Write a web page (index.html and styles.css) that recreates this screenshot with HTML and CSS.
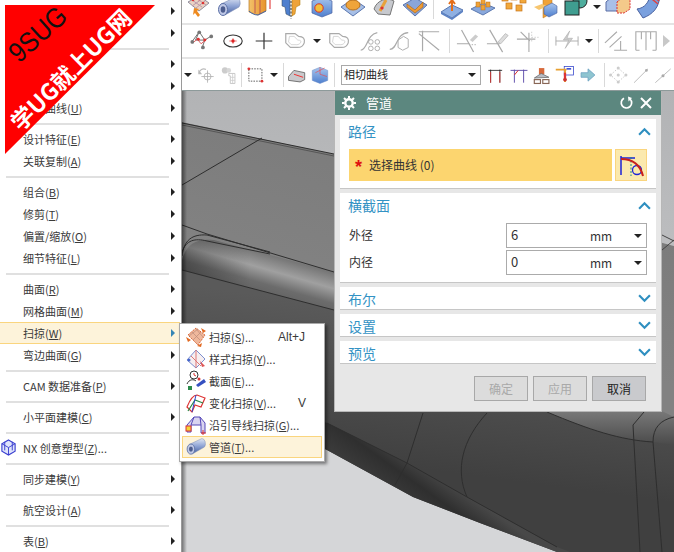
FILE: index.html
```html
<!DOCTYPE html>
<html lang="zh-CN">
<head>
<meta charset="utf-8">
<title>管道</title>
<link rel="stylesheet" href="styles.css">
</head>
<body>
<svg class="defs" aria-hidden="true">
  <defs>
    <linearGradient id="tube" x1="0" y1="0" x2="0" y2="1"><stop offset="0" stop-color="#dfe6f4"/><stop offset=".5" stop-color="#8ea3d4"/><stop offset="1" stop-color="#46609f"/></linearGradient>
    <linearGradient id="orange" x1="0" y1="0" x2="1" y2="0"><stop offset="0" stop-color="#f3c26a"/><stop offset="1" stop-color="#e8932c"/></linearGradient>
    <linearGradient id="blue" x1="0" y1="0" x2="0" y2="1"><stop offset="0" stop-color="#a9c6ee"/><stop offset="1" stop-color="#4e7fce"/></linearGradient>
    <symbol id="i-mesh" viewBox="0 0 26 26"><path d="M3 8 14 2l10 7-10 8z" fill="#e9d2c4" stroke="#8f8f9f"/><path d="M7 6l10 7M11 4l10 7M7 12l10-7M11 14l9-7" stroke="#b9a" fill="none"/><circle cx="8" cy="6" r="1.3" fill="#d33"/><circle cx="14" cy="5" r="1.3" fill="#d33"/><circle cx="18" cy="9" r="1.3" fill="#d33"/><path d="m9 14 5 1-2 2 3 4-2 2-3-4-2 2z" fill="#ee8a1f"/></symbol>
    <symbol id="i-tube" viewBox="0 0 26 26"><path d="M5 10 20 3a4.5 6 0 0 1 3 10L9 21z" fill="url(#tube)" stroke="#7d8db5" stroke-width=".6"/><ellipse cx="7" cy="15.500" rx="4.500" ry="6" fill="#bfc8e6" stroke="#5a6fa5"/><ellipse cx="7" cy="15.500" rx="2.300" ry="3.200" fill="#4d5d8e"/></symbol>
    <symbol id="i-ext" viewBox="0 0 26 26"><path d="M2 2h17v15l-8 4-9-3z" fill="url(#orange)" stroke="#b87a25" stroke-width=".7"/><path d="M8 4v15M13 3v17" stroke="#a35" stroke-width=".7" fill="none"/><path d="M2 17c3 3 6 4 9 4l8-4" stroke="#46a" fill="none"/><path d="M23 3v12M21 6l2-3 2 3" stroke="#d22" fill="none"/></symbol>
    <symbol id="i-split" viewBox="0 0 26 26"><path d="M4 1h8v21l-4-2-1-7-3-1z" fill="#4e7fce" stroke="#345"  stroke-width=".5"/><path d="M14 1h8v10l-4 2-1 7-3 2z" fill="#eea33a" stroke="#a70" stroke-width=".5"/><path d="M13 0v25" stroke="#333" stroke-dasharray="2 1.500"/></symbol>
    <symbol id="i-cube" viewBox="0 0 26 26"><path d="M3 7 14 3l9 4v12l-10 4-10-4z" fill="url(#blue)" stroke="#4a62a0" stroke-width=".7"/><circle cx="10" cy="14" r="4.200" fill="#f1bf3c" stroke="#d8352a"/></symbol>
    <symbol id="i-pad" viewBox="0 0 26 26"><path d="M1 13 13 5l12 8-12 9z" fill="#a7bfe6" stroke="#5a77b0"/><ellipse cx="13" cy="11" rx="7" ry="5" fill="#efa43a" stroke="#b9701a"/></symbol>
    <symbol id="i-fan" viewBox="0 0 26 26"><path d="M3 15C6 6 16 3 23 7l-4 14L7 20z" fill="#c7c9ce" stroke="#777"/><path d="M9 17 15 6" stroke="#e8a23a" stroke-width="3"/><circle cx="11" cy="14" r="1.600" fill="#d33"/></symbol>
    <symbol id="i-v" viewBox="0 0 26 26"><path d="M1 11 13 4l12 7-12 11z" fill="#8aa5d8" stroke="#5c76ad"/><path d="M5 10l8 6 8-8v5l-8 6-8-6z" fill="#ef9a32" stroke="#a8651a" stroke-width=".6"/></symbol>
    <symbol id="i-lift" viewBox="0 0 26 26"><path d="M2 18 13 11l11 5-11 8z" fill="#8fb0e2" stroke="#5a78b0"/><path d="M2 18v2l11 6 11-8v-2l-11 8z" fill="#5c82c4"/><path d="M13 17V7M10 10l3-4 3 4" stroke="#e46f1c" stroke-width="2" fill="none"/><path d="M7 4h12" stroke="#eeb348" stroke-width="3"/></symbol>
    <symbol id="i-blocks" viewBox="0 0 26 26"><path d="M1 15 13 9l12 5-12 7z" fill="#89a8dc" stroke="#5a78b0"/><g fill="#f0a236" stroke="#b9701a" stroke-width=".5"><rect x="6" y="8" width="4" height="5"/><rect x="11" y="5" width="4" height="5"/><rect x="16" y="8" width="4" height="5"/><rect x="11" y="11" width="4" height="5"/></g></symbol>
    <symbol id="i-dots" viewBox="0 0 26 26"><g fill="#f1a83c" stroke="#c8751c" stroke-width=".7"><rect x="1" y="1" width="6" height="6"/><rect x="10" y="0" width="6" height="6"/><rect x="19" y="3" width="6" height="6"/><rect x="5" y="9" width="6" height="6"/><rect x="15" y="11" width="6" height="6"/></g></symbol>
    <symbol id="i-mirror" viewBox="0 0 26 26"><path d="M11 1 20 5v14l-9 5z" fill="#f0a236" stroke="#b9701a" stroke-width=".5"/><path d="M2 13l8-3 5 2-8 4z" fill="#f7c66f"/><path d="M12 13l8-4 5 3v7l-8 4-5-3z" fill="url(#blue)" stroke="#4a62a0" stroke-width=".6"/></symbol>
    <symbol id="i-bool" viewBox="0 0 26 26"><circle cx="17" cy="7" r="7" fill="#4fae9e" stroke="#222"/><rect x="2" y="7" width="14" height="14" fill="#3f9d90" stroke="#222"/><rect x="3" y="0" width="4" height="4" fill="#e8e8e8" stroke="#c33"/></symbol>
    <symbol id="i-boxes" viewBox="0 0 26 26"><path d="M1 8 7 3h9v14H1z" fill="#a8bfe8" stroke="#5a6fa5"/><path d="M12 8l6-5h7v12l-6 4h-7z" fill="#f4c98a" stroke="#d33" stroke-dasharray="2 1"/></symbol>
    <symbol id="i-bend" viewBox="0 0 26 26"><path d="M2 15C10 14 14 8 15 1h10C24 14 18 20 8 24z" fill="#7aa0de" stroke="#4a62a0"/><path d="M12 1l11 9M15 0l9 7" stroke="#d44" stroke-width="1.500"/></symbol>

    <symbol id="i-spline" viewBox="0 0 26 26"><path d="M2 14 10 3l6 9 8-5M10 3l-4 9 10 0-3 9" stroke="#666" stroke-width="1" fill="none"/><path d="M3 15 8 11l4 5 6-5" stroke="#d55" fill="none"/><circle cx="2.500" cy="14" r="2" fill="#777"/><circle cx="10" cy="3.500" r="2" fill="#777"/><circle cx="23" cy="8" r="2" fill="#777"/><circle cx="14" cy="20" r="2" fill="#777"/><circle cx="9" cy="11" r="1.600" fill="#d33"/><circle cx="16" cy="12" r="1.600" fill="#d33"/></symbol>
    <symbol id="i-circle" viewBox="0 0 26 26"><ellipse cx="13" cy="13" rx="10" ry="6.500" fill="#fff" stroke="#333" stroke-width="1.200"/><circle cx="13" cy="13" r="1.800" fill="#d22"/><path d="M9 13h8M13 10v6" stroke="#d22" stroke-width=".7"/></symbol>
    <symbol id="i-plus" viewBox="0 0 26 26"><path d="M4 13h18M13 4v18" stroke="#333" stroke-width="1.300"/></symbol>
    <symbol id="i-outline" viewBox="0 0 26 26"><path d="M3 5h10l4 3c5 0 7 3 6 7-1 3-3 5-7 5H8l-5-5z" fill="none" stroke="#aaa" stroke-width="1.300"/><path d="M7 8h5l4 4c3 0 4 1 3 3-1 1-2 2-4 2H9l-3-3z" fill="none" stroke="#c8c8c8" stroke-width=".8"/></symbol>
    <symbol id="i-trim" viewBox="0 0 26 26"><path d="M4 23C12 22 10 6 22 4" fill="none" stroke="#aaa" stroke-width="1.300"/><g fill="none" stroke="#aaa"><circle cx="15" cy="14" r="2.500"/><circle cx="22" cy="14" r="2.500"/><circle cx="15" cy="21" r="2.500"/><circle cx="22" cy="21" r="2.500"/></g></symbol>
    <symbol id="i-offset" viewBox="0 0 26 26"><path d="M3 22C12 22 9 5 23 4" fill="none" stroke="#aaa" stroke-width="1.300"/><path d="M12 12l6-4 5 3v9l-6 3-5-3z" fill="none" stroke="#aaa"/></symbol>
    <symbol id="i-corner" viewBox="0 0 26 26"><path d="M2 3h22M6 2v22M2 5l22 18" fill="none" stroke="#aaa" stroke-width="1.300"/></symbol>
    <symbol id="i-cut" viewBox="0 0 26 26"><path d="M6 1l13 24M1 16h14" stroke="#aaa" stroke-width="1.300" fill="none"/><path d="M15 12l6-6 3 2-6 6z" fill="#ccc"/><path d="M14 17h8" stroke="#aaa" stroke-dasharray="1.500"/></symbol>
    <symbol id="i-pen" viewBox="0 0 26 26"><path d="M4 1l14 24M1 16h14" stroke="#aaa" stroke-width="1.300" fill="none"/><path d="M13 14l8-9 3 2-8 9z" fill="#ddd" stroke="#aaa" stroke-width=".7"/></symbol>
    <symbol id="i-cross" viewBox="0 0 26 26"><path d="M1 11h20M14 4v21M5 3l10 10" stroke="#aaa" stroke-width="1.200" fill="none"/><path d="M17 3v12M17 9h8" stroke="#ccc" stroke-dasharray="1.500"/></symbol>
    <symbol id="i-dim" viewBox="0 0 26 26"><path d="M1 8v10M25 8v10M1 13h24" stroke="#aaa" fill="none"/><path d="M16 2 9 12h6l-4 9 8-11h-6z" fill="#ccc" stroke="#aaa" stroke-width=".6"/></symbol>
    <symbol id="i-para" viewBox="0 0 26 26"><path d="M1 15 14 3M6 20 19 8M11 23h14M18 13v10" stroke="#aaa" stroke-width="1.200" fill="none"/></symbol>
    <symbol id="i-frame" viewBox="0 0 26 26"><path d="M2 23V3h22v20M2 23h4M24 23h-4M8 3v8M18 3v8M13 3v20" stroke="#aaa" stroke-width="1.200" fill="none"/></symbol>

    <symbol id="i-rotate" viewBox="0 0 26 26"><path d="M4 11a6 6 0 0 1 9-5" fill="none" stroke="#bbb" stroke-width="1.500"/><path d="M3 6v6h5z" fill="#bbb"/><circle cx="15" cy="15" r="4.500" fill="none" stroke="#aaa"/><path d="M15 7v16M7 15h16" stroke="#aaa"/></symbol>
    <symbol id="i-gears" viewBox="0 0 26 26"><circle cx="9" cy="7" r="4" fill="#ccc"/><circle cx="14" cy="7" r="3" fill="#d8d8d8"/><path d="M14 11h8v13h-6V14h-2z" fill="none" stroke="#bbb"/><path d="M16 16h6M16 20h6M19 11v13" stroke="#ccc"/></symbol>
    <symbol id="i-rect" viewBox="0 0 26 26"><path d="M5 5h17v16H5z" fill="none" stroke="#333" stroke-dasharray="2 1.500"/><circle cx="5" cy="5" r="1.800" fill="#d33"/><circle cx="22" cy="21" r="1.800" fill="#d33"/></symbol>
    <symbol id="i-solid" viewBox="0 0 26 26"><path d="M2 15 9 7l14 3v9l-6 3-15-2z" fill="#c9c9cc" stroke="#555"/><path d="M9 12l12 4" stroke="#e33" stroke-width="1.300"/></symbol>
    <symbol id="i-sect" viewBox="0 0 26 26"><path d="M3 7 13 3l10 4v13l-10 4-10-4z" fill="url(#blue)" stroke="#6d8ec8" stroke-width=".7"/><path d="M7 10l12-6M13 3v9l9 3" stroke="#e44" fill="none" stroke-width=".8"/></symbol>
    <symbol id="i-sn1" viewBox="0 0 26 26"><path d="M3 7h18M6 6v17M18 6v17" stroke="#222" stroke-width="1.100" fill="none"/><path d="M6 9v14M18 9v14" stroke="#d33" stroke-width="1.100"/></symbol>
    <symbol id="i-sn2" viewBox="0 0 26 26"><path d="M2 7h22M7 6v17M19 6v17" stroke="#5a48a8" stroke-width="1.200" fill="none"/><path d="M7 13 12 7" stroke="#d33" stroke-width="1.300"/></symbol>
    <symbol id="i-sn3" viewBox="0 0 26 26"><rect x="9" y="4" width="7" height="8" fill="#d86a3c"/><path d="M3 17 12 11l10 5z" fill="#b8bcc4" stroke="#666"/><rect x="3" y="19" width="8" height="5" fill="none" stroke="#865" stroke-width="1.500"/><rect x="14" y="19" width="8" height="5" fill="none" stroke="#865" stroke-width="1.500"/></symbol>
    <symbol id="i-sn4" viewBox="0 0 26 26"><rect x="12" y="2" width="12" height="11" fill="#fff" stroke="#34c"/><path d="M1 6h14M13 6v8M13 14v8" stroke="#e8a030" stroke-width="2.500"/><path d="M13 10v7" stroke="#d33" stroke-width="3"/><circle cx="13" cy="19" r="2.500" fill="#c33"/><path d="M15 5h6" stroke="#34c" stroke-width="2"/></symbol>
    <symbol id="i-go" viewBox="0 0 26 26"><path d="M4 10h9V5l9 8-9 8v-5H4z" fill="#8fc5d0" stroke="#6a9fc0"/></symbol>
    <symbol id="i-snapg" viewBox="0 0 26 26"><path d="M12 4 22 13 12 22 2 13z" fill="none" stroke="#bbb" stroke-dasharray="2 2"/><g fill="#ccc"><circle cx="12" cy="4" r="2"/><circle cx="22" cy="13" r="2"/><circle cx="12" cy="22" r="2"/><circle cx="2" cy="13" r="2"/><circle cx="12" cy="13" r="2"/></g></symbol>
    <symbol id="i-lineg" viewBox="0 0 26 26"><path d="M4 23 22 5" stroke="#aaa"/><circle cx="20" cy="7" r="1.800" fill="#aaa"/></symbol>
    <symbol id="i-lineh" viewBox="0 0 26 26"><path d="M3 23 23 5" stroke="#aaa"/><circle cx="13" cy="14" r="2" fill="#aaa"/></symbol>

    <symbol id="m-sweep" viewBox="0 0 22 22"><path d="M3 9 11 2l9 7-7 10z" fill="#efb89c" stroke="#d8683a" stroke-dasharray="2 1"/><path d="M7 6l8 8M11 3l7 8M4 10l9-7M8 14l8-8" stroke="#bb8a78" stroke-width=".7" fill="none"/><path d="M1 11l2 5 3-2M16 2l5 3-3 2M12 20l4 1 1-4" fill="#e26a22"/></symbol>
    <symbol id="m-style" viewBox="0 0 22 22"><path d="M2 12 11 2l9 9-9 9z" fill="#f6eef0" stroke="#7c8fd0"/><path d="M6 8l10 10M11 2v18" stroke="#d77" fill="none"/><circle cx="4" cy="12" r="1.500" fill="#46c"/><path d="M15 13l5 5-3 1z" fill="#d55"/></symbol>
    <symbol id="m-sect" viewBox="0 0 22 22"><circle cx="9" cy="5" r="4" fill="#fff" stroke="#333"/><path d="M9 3v2l2 1" stroke="#d33" fill="none"/><path d="M2 14c2-5 7-5 9-3" stroke="#333" fill="none"/><path d="M11 15l8-6 2 3-8 5z" fill="#3550c0"/><path d="M3 16h4v4H3z" fill="#2a8a4a"/><circle cx="14" cy="9" r="1.500" fill="#d33"/></symbol>
    <symbol id="m-vary" viewBox="0 0 22 22"><path d="M2 15C6 5 10 3 12 3l8 3-4 9-6-2-3 7z" fill="#fff" stroke="#d33" stroke-width="1.200"/><path d="M3 19 10 8l8 3" stroke="#2a8a4a" stroke-width="1.200" fill="none"/><path d="M11 3 7 20" stroke="#34c" fill="none"/></symbol>
    <symbol id="m-guide" viewBox="0 0 22 22"><path d="M2 11 9 3h6l5 6v10h-4V11H6v7H2z" fill="#d9d4f0" stroke="#5548b8"/><path d="M9 3 6 11M15 3l1 8" stroke="#5548b8" fill="none"/><rect x="1" y="12" width="5" height="5" fill="#f3d33a" stroke="#d33"/><path d="M18 16v5M16 19h5" stroke="#d33"/></symbol>
  </defs>
</svg>

<div class="app">
  <nav class="menu">
    <div class="item has-sub"></div>
    <div class="item has-sub"></div>
    <hr class="sep">
    <div class="item has-sub"></div>
    <div class="item has-sub"></div>
    <div class="item has-sub">派生曲线(<u>U</u>)</div>
    <hr class="sep">
    <div class="item has-sub">设计特征(<u>E</u>)</div>
    <div class="item has-sub">关联复制(<u>A</u>)</div>
    <hr class="sep">
    <div class="item has-sub">组合(<u>B</u>)</div>
    <div class="item has-sub">修剪(<u>T</u>)</div>
    <div class="item has-sub">偏置/缩放(<u>O</u>)</div>
    <div class="item has-sub">细节特征(<u>L</u>)</div>
    <hr class="sep">
    <div class="item has-sub">曲面(<u>R</u>)</div>
    <div class="item has-sub">网格曲面(<u>M</u>)</div>
    <div class="item has-sub active">扫掠(<u>W</u>)</div>
    <div class="item has-sub">弯边曲面(<u>G</u>)</div>
    <hr class="sep">
    <div class="item has-sub">CAM 数据准备(<u>P</u>)</div>
    <hr class="sep">
    <div class="item has-sub">小平面建模(<u>C</u>)</div>
    <hr class="sep">
    <div class="item"><svg class="nx-icon" viewBox="0 0 18 18"><path d="M9 1l7 4v8l-7 4-7-4V5z" fill="#dfe4fb" stroke="#3a3fd0" stroke-width="1.200"/><path d="M2 5l7 4 7-4M9 9v8M5 3v9M13 3v9" fill="none" stroke="#3a3fd0"/></svg><span>NX 创意塑型(<u>Z</u>)...</span></div>
    <hr class="sep">
    <div class="item has-sub">同步建模(<u>Y</u>)</div>
    <hr class="sep">
    <div class="item has-sub">航空设计(<u>A</u>)</div>
    <hr class="sep">
    <div class="item has-sub">表(<u>B</u>)</div>
  </nav>

  <main class="work">
    <div class="toolbars">
      <div class="bar bar-1">
        <span class="t w31"><svg class="ic"><use href="#i-mesh"/></svg></span>
        <span class="t w31"><svg class="ic"><use href="#i-tube"/></svg></span>
        <span class="t w31"><svg class="ic"><use href="#i-ext"/></svg></span>
        <span class="t w31"><svg class="ic"><use href="#i-split"/></svg></span>
        <span class="t w31"><svg class="ic"><use href="#i-cube"/></svg></span>
        <span class="t w31"><svg class="ic"><use href="#i-pad"/></svg></span>
        <span class="t w31"><svg class="ic"><use href="#i-fan"/></svg></span>
        <span class="t w31"><svg class="ic"><use href="#i-v"/></svg></span>
        <span class="vr w6"></span>
        <span class="t w31"><svg class="ic"><use href="#i-lift"/></svg></span>
        <span class="t w31"><svg class="ic"><use href="#i-blocks"/></svg></span>
        <span class="t w31"><svg class="ic"><use href="#i-dots"/></svg></span>
        <span class="t w31"><svg class="ic"><use href="#i-mirror"/></svg></span>
        <span class="t w31"><svg class="ic"><use href="#i-bool"/></svg></span>
        <span class="caret w12"></span>
        <span class="t w30"><svg class="ic"><use href="#i-boxes"/></svg></span>
        <span class="t w30"><svg class="ic"><use href="#i-bend"/></svg></span>
      </div>
      <div class="bar bar-2">
        <span class="t w31"><svg class="ic"><use href="#i-spline"/></svg></span>
        <span class="t w31"><svg class="ic"><use href="#i-circle"/></svg></span>
        <span class="t w31"><svg class="ic"><use href="#i-plus"/></svg></span>
        <span class="t w31"><svg class="ic"><use href="#i-outline"/></svg></span>
        <span class="caret w14"></span>
        <span class="t w30"><svg class="ic"><use href="#i-outline"/></svg></span>
        <span class="t w30"><svg class="ic"><use href="#i-trim"/></svg></span>
        <span class="t w30"><svg class="ic"><use href="#i-offset"/></svg></span>
        <span class="t w30"><svg class="ic"><use href="#i-corner"/></svg></span>
        <span class="vr w9"></span>
        <span class="t w30"><svg class="ic"><use href="#i-cut"/></svg></span>
        <span class="t w30"><svg class="ic"><use href="#i-pen"/></svg></span>
        <span class="t w30"><svg class="ic"><use href="#i-cross"/></svg></span>
        <span class="vr w9"></span>
        <span class="t w30"><svg class="ic"><use href="#i-dim"/></svg></span>
        <span class="caret w13"></span>
        <span class="vr w6"></span>
        <span class="t w30"><svg class="ic"><use href="#i-para"/></svg></span>
        <span class="t w30"><svg class="ic"><use href="#i-frame"/></svg></span>
        <span class="caret-right"></span>
      </div>
      <div class="bar bar-3">
        <span class="caret w12"></span>
        <span class="t w24"><svg class="ic"><use href="#i-rotate"/></svg></span>
        <span class="t w20"><svg class="ic"><use href="#i-gears"/></svg></span>
        <span class="vr w6"></span>
        <span class="t w22"><svg class="ic"><use href="#i-rect"/></svg></span>
        <span class="caret w16"></span>
        <span class="vr w2"></span>
        <span class="t w26"><svg class="ic"><use href="#i-solid"/></svg></span>
        <span class="t w20"><svg class="ic"><use href="#i-sect"/></svg></span>
        <span class="vr w8"></span>
        <div class="combo"><span>相切曲线</span><i class="dd"></i></div>
        <span class="t w23"><svg class="ic"><use href="#i-sn1"/></svg></span>
        <span class="t w23"><svg class="ic"><use href="#i-sn2"/></svg></span>
        <span class="t w23"><svg class="ic"><use href="#i-sn3"/></svg></span>
        <span class="t w23"><svg class="ic"><use href="#i-sn4"/></svg></span>
        <span class="t w23"><svg class="ic"><use href="#i-go"/></svg></span>
        <span class="vr w8"></span>
        <span class="t w22"><svg class="ic"><use href="#i-snapg"/></svg></span>
        <span class="t w22"><svg class="ic"><use href="#i-lineg"/></svg></span>
        <span class="t w22"><svg class="ic"><use href="#i-lineh"/></svg></span>
      </div>
    </div>

    <div class="viewport">
      <svg class="scene" viewBox="182 91 492 461" preserveAspectRatio="none" aria-hidden="true">
        <defs>
          <linearGradient id="sky" x1="0" y1="0" x2="0" y2="1"><stop offset="0" stop-color="#b2b3b5"/><stop offset="1" stop-color="#bcbdbf"/></linearGradient>
          <linearGradient id="roof" gradientUnits="userSpaceOnUse" x1="300" y1="130" x2="260" y2="270"><stop offset="0" stop-color="#7c7c7c"/><stop offset="1" stop-color="#828282"/></linearGradient>
          <linearGradient id="band" gradientUnits="userSpaceOnUse" x1="275" y1="240" x2="255" y2="310"><stop offset="0" stop-color="#646464"/><stop offset=".22" stop-color="#777"/><stop offset=".42" stop-color="#a0a0a0"/><stop offset=".62" stop-color="#6c6c6c"/><stop offset="1" stop-color="#525252"/></linearGradient>
          <linearGradient id="bandfade" gradientUnits="userSpaceOnUse" x1="182" y1="0" x2="250" y2="0"><stop offset="0" stop-color="#000" stop-opacity=".3"/><stop offset="1" stop-color="#000" stop-opacity="0"/></linearGradient>
          <linearGradient id="body" gradientUnits="userSpaceOnUse" x1="300" y1="300" x2="280" y2="450"><stop offset="0" stop-color="#5a5a5a"/><stop offset="1" stop-color="#404040"/></linearGradient>
          <linearGradient id="lip" gradientUnits="userSpaceOnUse" x1="420" y1="460" x2="395" y2="495"><stop offset="0" stop-color="#484848"/><stop offset=".5" stop-color="#2f2f2f"/><stop offset="1" stop-color="#3a3a3a"/></linearGradient>
          <linearGradient id="rightcap" gradientUnits="userSpaceOnUse" x1="660" y1="410" x2="660" y2="445"><stop offset="0" stop-color="#7a7a7a"/><stop offset="1" stop-color="#4a4a4a"/></linearGradient>
          <linearGradient id="shade" x1="0" y1="0" x2="1" y2="0"><stop offset="0" stop-color="#000" stop-opacity=".45"/><stop offset="1" stop-color="#000" stop-opacity="0"/></linearGradient>
        </defs>
        <rect x="182" y="91" width="492" height="461" fill="#d5d6d8"/>
        <path d="M182 91H674V246L334 154 182 122z" fill="url(#sky)"/>
        <path d="M182 122 334 154 674 246V440L182 280z" fill="url(#roof)"/>
        <path d="M182 260C186 244 196 238 214 240L334 272 674 420V470L182 300z" fill="url(#band)"/>
        <path d="M182 260C186 244 196 238 214 240L334 272 674 420V470L182 300z" fill="url(#bandfade)"/>
        <path d="M182 270 334 310 674 440V552H557L480 523 413 497 327 450 182 380z" fill="url(#body)"/>
        <path d="M182 360 327 423 407 463 467 497 557 547 570 552H557L480 523 413 497 327 450 182 380z" fill="url(#lip)"/>
        <path d="M547 412C590 430 620 440 653 442L674 445V417L660 410z" fill="url(#rightcap)"/>
        <g fill="none" stroke="#2e2e2e">
          <path d="M182 123 334 154"/>
          <path d="M182 125 334 156" stroke="#555"/>
          <path d="M182 185 262 138"/>
          <path d="M182 225 207 234 334 272"/>
          <path d="M182 256C184 240 192 234 207 235L270 252"/>
          <path d="M182 252C186 240 195 238 207 241L270 254"/>
          <path d="M182 270 334 310"/>
          <path d="M327 423 407 463 467 497 557 547"/>
          <path d="M423 413 407 463 395 485"/>
          <path d="M487 413C462 440 455 470 467 497"/>
          <path d="M547 412C590 430 620 440 653 442"/>
          <path d="M674 417C660 420 653 428 653 442L662 552"/>
          <path d="M644 412 633 425 640 552"/>
        </g>
        <rect x="182" y="91" width="5" height="461" fill="url(#shade)"/>
        <path d="M662 235 674 241M662 250 674 240" stroke="#444" fill="none"/>
      </svg>

      <section class="dialog">
        <header class="dlg-title">
          <svg class="gear" viewBox="0 0 14 14"><circle cx="7" cy="7" r="3.700" fill="none" stroke="#fff" stroke-width="2.400"/><path d="M7 0v2.500M7 11.500V14M0 7h2.500M11.500 7H14M2 2l1.800 1.800M10.200 10.200 12 12M2 12l1.800-1.800M10.200 3.800 12 2" stroke="#fff" stroke-width="2"/></svg>
          <span class="dlg-name">管道</span>
          <svg class="reset" viewBox="0 0 14 14"><path d="M5 2.200A5.200 5.200 0 1 0 11 3" fill="none" stroke="#fff" stroke-width="1.700"/><path d="M9 .5 9.500 5.500 13 2z" fill="#fff"/></svg>
          <svg class="close" viewBox="0 0 12 12"><path d="M1 1l10 10M11 1 1 11" stroke="#fff" stroke-width="2"/></svg>
        </header>
        <div class="dlg-body">
          <div class="panel">
            <div class="panel-head"><span>路径</span><svg class="chev" viewBox="0 0 12 8"><path d="M1 7l5-5 5 5" fill="none" stroke="#2f8fc0" stroke-width="2"/></svg></div>
            <div class="select-row">
              <div class="select-field"><span class="req">*</span>选择曲线 (0)</div>
              <div class="select-icon">
                <svg viewBox="0 0 26 26"><path d="M3 4v19M3 6h14" stroke="#1c22d8" stroke-width="1.500" fill="none"/><path d="M13 5v19" stroke="#178a88" stroke-dasharray="2 1.500"/><circle cx="19" cy="18" r="4.500" fill="none" stroke="#1c22d8" stroke-width="1.300"/><path d="M3 7C14 7 22 12 25 24" stroke="#c8201c" stroke-width="2" fill="none"/></svg>
              </div>
            </div>
          </div>
          <div class="panel">
            <div class="panel-head"><span>横截面</span><svg class="chev" viewBox="0 0 12 8"><path d="M1 7l5-5 5 5" fill="none" stroke="#2f8fc0" stroke-width="2"/></svg></div>
            <div class="fields">
              <label class="field"><span class="field-name">外径</span><span class="input"><span class="val">6</span><span class="unit">mm</span><i class="dd"></i></span></label>
              <label class="field"><span class="field-name">内径</span><span class="input"><span class="val">0</span><span class="unit">mm</span><i class="dd"></i></span></label>
            </div>
          </div>
          <div class="panel closed"><div class="panel-head"><span>布尔</span><svg class="chev" viewBox="0 0 12 8"><path d="M1 1l5 5 5-5" fill="none" stroke="#2f8fc0" stroke-width="2"/></svg></div></div>
          <div class="panel closed"><div class="panel-head"><span>设置</span><svg class="chev" viewBox="0 0 12 8"><path d="M1 1l5 5 5-5" fill="none" stroke="#2f8fc0" stroke-width="2"/></svg></div></div>
          <div class="panel closed"><div class="panel-head"><span>预览</span><svg class="chev" viewBox="0 0 12 8"><path d="M1 1l5 5 5-5" fill="none" stroke="#2f8fc0" stroke-width="2"/></svg></div></div>
        </div>
        <footer class="dlg-foot">
          <span class="btn off">确定</span>
          <span class="btn off">应用</span>
          <span class="btn">取消</span>
        </footer>
      </section>
    </div>
  </main>

  <div class="flyout">
    <div class="fly-item"><svg class="fly-ic"><use href="#m-sweep"/></svg><span class="fly-label">扫掠(<u>S</u>)...</span><span class="key key-alt">Alt+J</span></div>
    <div class="fly-item"><svg class="fly-ic"><use href="#m-style"/></svg><span class="fly-label">样式扫掠(<u>Y</u>)...</span></div>
    <div class="fly-item"><svg class="fly-ic"><use href="#m-sect"/></svg><span class="fly-label">截面(<u>E</u>)...</span></div>
    <div class="fly-item"><svg class="fly-ic"><use href="#m-vary"/></svg><span class="fly-label">变化扫掠(<u>V</u>)...</span><span class="key key-v">V</span></div>
    <div class="fly-item"><svg class="fly-ic"><use href="#m-guide"/></svg><span class="fly-label">沿引导线扫掠(<u>G</u>)...</span></div>
    <div class="fly-item on"><svg class="fly-ic"><use href="#i-tube"/></svg><span class="fly-label">管道(<u>T</u>)...</span></div>
  </div>

  <div class="banner">
    <span class="brand">9SUG</span>
    <span class="slogan">学UG就上UG网</span>
  </div>
</div>
</body>
</html>
```

FILE: styles.css
```css
* { box-sizing: border-box; }
html, body { margin: 0; padding: 0; }
body { background: #fff; color: #333; font: 11px/1 "Noto Sans CJK SC", "Noto Sans", sans-serif; }
u { text-underline-offset: 1px; }
.defs { position: absolute; width: 0; height: 0; }

.app { position: relative; display: flex; width: 674px; height: 552px; overflow: hidden; }

/* left menu */
.menu { flex: 0 0 182px; background: #fff; border-right: 1px solid #9a9a9a; overflow: hidden; }
.item { position: relative; display: flex; align-items: center; height: 22px; padding-left: 23px; white-space: pre; color: #3a3a3a; }
.has-sub::after { content: ""; position: absolute; left: 171px; top: 7px; border-left: 4px solid #222; border-top: 4px solid transparent; border-bottom: 4px solid transparent; }
.item.active { background: #fdf3da; border: 1px solid #fad57e; border-left: 0; padding-left: 23px; width: 180px; }
.item.active::after { border-left-color: #3585b5; top: 6px; }
.sep { height: 2px; margin: 4px 12px 3px 6px; border: 0; background: #e0e0e0; }
.nx-icon { position: absolute; left: 0; top: 2px; width: 17px; height: 17px; }

/* toolbars */
.work { flex: 1; min-width: 0; display: flex; flex-direction: column; }
.toolbars { flex: 0 0 91px; background: #fff; border-bottom: 1px solid #8d9a9a; }
.bar { display: flex; align-items: center; overflow: hidden; border-bottom: 2px solid #e4e4e4; }
.bar-1 { height: 25px; padding-bottom: 10px; }
.bar-2 { height: 34px; padding-left: 4px; }
.bar-3 { height: 31px; border-bottom: 0; }
.t { display: flex; justify-content: center; align-items: center; flex: none; height: 26px; }
.ic { flex: none; width: 26px; height: 26px; overflow: visible; }
.bar-2 .ic { width: 24px; height: 24px; }
.bar-3 .ic { width: 20px; height: 20px; }
.w20 { width: 20px; } .w22 { width: 22px; } .w23 { width: 23px; } .w24 { width: 24px; } .w26 { width: 26px; }
.w30 { width: 30px; } .w31 { width: 31px; }
.vr, .caret { position: relative; flex: none; height: 28px; }
.w2 { width: 2px; } .w6 { width: 6px; } .w8 { width: 8px; } .w9 { width: 9px; }
.w12 { width: 12px; } .w13 { width: 13px; } .w14 { width: 14px; } .w16 { width: 16px; }
.vr::after { content: ""; position: absolute; left: 50%; top: 2px; bottom: 2px; width: 1px; background: #d9d9d9; }
.caret::after { content: ""; position: absolute; left: 50%; top: 12px; margin-left: -4px; border-top: 4px solid #222; border-left: 4px solid transparent; border-right: 4px solid transparent; }
.caret-right { flex: none; width: 0; margin-left: 2px; border-left: 7px solid #c8c8c8; border-top: 6px solid transparent; border-bottom: 6px solid transparent; }

.combo { flex: none; display: flex; align-items: center; justify-content: space-between; width: 140px; height: 20px; margin: 0 3.5px 0 3px; padding: 0 4px 0 2px; border: 1px solid #a9a9a9; background: #fff; color: #222; }
.dd { display: block; border-top: 4px solid #222; border-left: 4px solid transparent; border-right: 4px solid transparent; }

/* 3D viewport */
.viewport { position: relative; flex: 1; min-height: 0; }
.scene { display: block; width: 100%; height: 100%; }

/* dialog */
.dialog { position: absolute; left: 152px; top: 0; width: 328px; height: 321px; display: flex; flex-direction: column; background: #e7e7e7; border: 1px solid #b7b7b7; border-top: 0; }
.dlg-title { display: flex; align-items: center; flex: none; height: 24px; padding: 0 9px 0 7px; background: #5c877f; color: #fff; }
.gear { width: 14px; height: 14px; }
.dlg-name { flex: 1; margin-left: 10px; font-size: 13px; padding-bottom: 1px; }
.reset { width: 14px; height: 14px; margin-right: 7px; }
.close { width: 12px; height: 12px; }
.dlg-body { display: flex; flex-direction: column; gap: 4px; padding: 4px 5px 0; }
.panel { background: #fff; border-bottom: 1px solid #c6c6c6; height: 70px; }
.panel:nth-child(2) { height: 90px; }
.panel.closed { height: 23px; }
.panel-head { display: flex; align-items: center; justify-content: space-between; height: 24px; padding: 0 5px 0 8px; color: #3392c4; font-size: 14px; }
.closed .panel-head { height: 23px; }
.chev { width: 13px; height: 9px; }
.select-row { display: flex; gap: 3px; padding: 6px 9px 0; }
.select-field { flex: 1; display: flex; align-items: center; height: 32px; padding-left: 6px; background: #fcd56f; color: #333; font-size: 12px; }
.req { width: 14px; padding-top: 3px; color: #e01010; font: bold 18px/1 "Liberation Sans", sans-serif; }
.select-icon { flex: none; width: 32px; height: 32px; padding: 2px; background: #fbe9ae; border: 1px solid #fad57e; }
.select-icon svg { display: block; width: 26px; height: 26px; }
.fields { display: flex; flex-direction: column; gap: 2px; padding: 6px 9px 0; }
.field { display: flex; align-items: center; justify-content: space-between; font-size: 12px; color: #333; }
.field-name { padding-bottom: 2px; }
.input { display: flex; align-items: center; width: 141px; height: 25px; padding: 0 4px; border: 1px solid #ababab; background: #fff; font-size: 12px; }
.val { flex: 1; font-size: 13px; padding-bottom: 2px; }
.unit { width: 44px; }
.btn { display: flex; align-items: center; justify-content: center; width: 54px; height: 25px; border: 1px solid #a8a8a8; background: #c9cacd; color: #222; font-size: 12px; }
.btn.off { background: #dcdcdc; color: #a9a9a9; }
.dlg-foot { display: flex; justify-content: flex-end; gap: 5px; margin-top: 12px; padding-right: 15px; }

/* flyout */
.flyout { position: absolute; left: 179px; top: 323px; width: 146px; padding: 2px 2px 3px; background: #fff; border: 1px solid #a9a9a9; box-shadow: 2px 2px 3px rgba(0,0,0,.45); }
.fly-item { display: flex; align-items: center; height: 22px; padding-left: 3px; color: #3a3a3a; white-space: pre; position: relative; }
.fly-ic { flex: none; width: 22px; height: 22px; }
.fly-label { margin-left: 2px; }
.key { position: absolute; top: 5px; font-family: "Liberation Sans", sans-serif; font-size: 12px; }
.key-alt { left: 96px; }
.key-v { left: 116px; }
.fly-item.on { background: #fdf3da; outline: 1px solid #fad57e; outline-offset: -1px; }

/* watermark */
.banner { position: absolute; left: 5px; top: 5px; width: 150px; height: 149px; background: #f00; clip-path: polygon(0 0, 100% 0, 0 100%); }
.brand, .slogan { position: absolute; white-space: nowrap; transform-origin: left center; }
.brand { left: 8px; top: 38px; color: #111; font: 28px/1 "Liberation Sans", sans-serif; transform: rotate(-42deg) scaleX(.88); }
.slogan { left: 9px; top: 109px; color: #fff; font: bold 23px/1 "Noto Sans CJK SC", "Liberation Sans", sans-serif; transform: rotate(-45deg); }
```
